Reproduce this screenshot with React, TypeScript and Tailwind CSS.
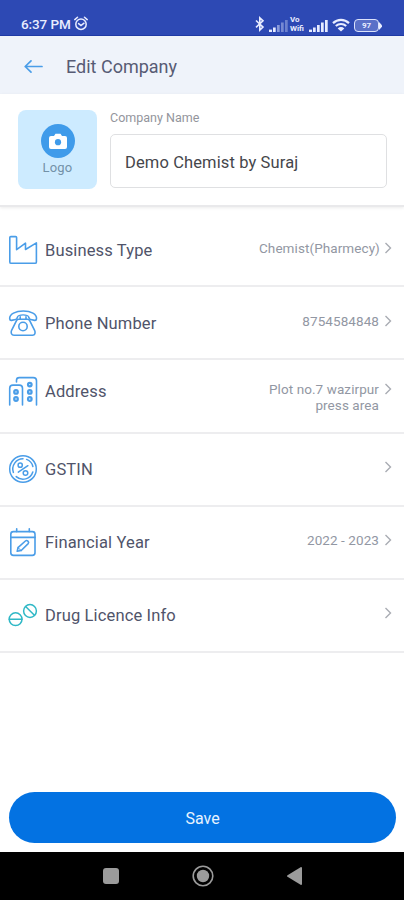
import React from 'react';

interface CompanyRow {
  label: string;
  value?: string;
  icon: React.ReactNode;
  alignTop?: boolean;
}

const iconProps = {
  width: 30,
  height: 30,
  viewBox: '0 0 30 30',
  fill: 'none',
  stroke: '#4a9de8',
  strokeWidth: 1.6,
  strokeLinecap: 'round' as const,
  strokeLinejoin: 'round' as const,
};

function FactoryIcon() {
  return (
    <svg {...iconProps}>
      <path d="M2.8 1.6h4.8q1 0 1 1v12.1l8.9-6.5v6.3l10.9-6.6v19q0 1.4-1.4 1.4H3.2q-1.4 0-1.4-1.4V2.6q0-1 1-1Z" />
    </svg>
  );
}

function PhoneIcon() {
  return (
    <svg {...iconProps}>
      <path d="M9.4 9.3c-.3 1.5-.9 2-1.8 2.2l-4.1.9c-1.1.1-1.7-.5-1.8-1.5C1.2 6.1 7.7 3 15.3 3S29 6.1 28.5 10.9c-.1 1-.7 1.6-1.8 1.5l-4.1-.9c-.9-.2-1.5-.7-1.8-2.2" />
      <path d="M9.4 9.3C10 7.4 12.4 6.9 15.1 6.9s5.1.5 5.7 2.4" strokeWidth="1.2" />
      <path d="M12.2 8.8v2.4h5.8V8.8M12.2 11.2h-1.4c-1.1 0-1.7.5-2.3 1.5l-4.9 9.6c-1.1 2.5-.1 5 2.4 5h18.5c2.5 0 3.2-2.5 2.1-5l-4.9-9.6c-.6-1-1.2-1.5-2.3-1.5H18" />
      <circle cx="15" cy="18.5" r="4.2" />
    </svg>
  );
}

function BuildingsIcon() {
  return (
    <svg {...iconProps}>
      <path d="M1.7 29V12.3q0-3.2 3.2-3.2h6.4q3.2 0 3.2 3.2V29M8.5 6V4.2q0-2.6 2.8-2.6h14q3.2 0 3.2 3.2V29" />
      <g strokeWidth="2.2">
        <circle cx="8" cy="15.9" r="1.8" />
        <circle cx="8" cy="23" r="1.8" />
        <circle cx="21.8" cy="8.6" r="1.8" />
        <circle cx="21.8" cy="15.9" r="1.8" />
        <circle cx="21.8" cy="23" r="1.8" />
      </g>
    </svg>
  );
}

function GstIcon() {
  return (
    <svg {...iconProps} strokeWidth={1.5}>
      <circle cx="15" cy="15" r="13.3" />
      <path d="M15 4.8A10.2 10.2 0 0 0 5.4 18.4M8.2 22.6A10.2 10.2 0 0 0 24.8 18M24.9 12.5A10.2 10.2 0 0 0 18.6 5.4" />
      <path d="m10.3 18.2 9.6-6.5" />
      <circle cx="12.2" cy="11.2" r="2.1" />
      <circle cx="17.5" cy="19" r="2.3" />
    </svg>
  );
}

function CalendarIcon() {
  return (
    <svg {...iconProps}>
      <rect x="2.8" y="4.6" width="24.2" height="23.8" rx="2.6" />
      <path d="M2.8 10.4H27M8.7 1.8v2.8M21.3 1.8v2.8" />
      <path d="m10 20.7 7.4-6.7c1.6-1.3 4.2.9 2.8 2.6l-7 6.9-4 .8.8-3.6Z" />
      <path d="m10 20.7 3.2 2.8" strokeWidth="1" />
    </svg>
  );
}

function PillsIcon() {
  return (
    <svg {...iconProps} stroke="#2fb8c6" strokeWidth={1.5}>
      <circle cx="7.6" cy="19.2" r="6.4" />
      <path d="M1.2 19.2H14" />
      <circle cx="22" cy="11" r="6.4" />
      <path d="m17.6 6.5 8.8 8.8" />
    </svg>
  );
}

const rows: CompanyRow[] = [
  { label: 'Business Type', value: 'Chemist(Pharmecy)', icon: <FactoryIcon /> },
  { label: 'Phone Number', value: '8754584848', icon: <PhoneIcon /> },
  { label: 'Address', value: 'Plot no.7 wazirpur press area', icon: <BuildingsIcon />, alignTop: true },
  { label: 'GSTIN', icon: <GstIcon /> },
  { label: 'Financial Year', value: '2022 - 2023', icon: <CalendarIcon /> },
  { label: 'Drug Licence Info', icon: <PillsIcon /> },
];

function SignalBars({ dim }: { dim?: boolean }) {
  return (
    <svg width="19" height="13" viewBox="0 0 19 13" fill="#e6ebff">
      <rect x="0" y="10.6" width="3" height="2.4" />
      <rect x="4" y="8.5" width="2.7" height="4.5" />
      <rect x="8" y="6" width="2.7" height="7" opacity={dim ? 0.5 : 1} />
      <rect x="12" y="3.5" width="2.7" height="9.5" opacity={dim ? 0.4 : 1} />
      <rect x="16" y="1" width="2.7" height="12" opacity={dim ? 0.35 : 1} />
    </svg>
  );
}

function StatusBar() {
  return (
    <div className="flex h-9 items-end border-b border-[#1f3aa5] bg-[#2d49b4] pb-[3px] pl-[21px] pr-[22px] text-[#e9edff]">
      <span className="text-[13.5px] leading-[15px] font-medium tracking-[-0.1px]">6:37 PM</span>
      <svg className="ml-[3px] mb-px" width="14" height="15" viewBox="0 0 14 15" fill="none" stroke="currentColor" strokeWidth="1.5" strokeLinecap="round">
        <circle cx="7" cy="8.2" r="5.2" />
        <path d="M.8 3.6 3.5 1.2M13.2 3.6l-2.7-2.4M4.6 7.6 7 9.6l3-2.4" />
      </svg>
      <div className="ml-auto flex items-end">
        <svg className="mr-[4px]" width="10" height="16" viewBox="0 0 10 16" fill="none" stroke="currentColor" strokeWidth="1.6">
          <path d="m1 4.5 7 6.6-3.2 3V1.9L8 4.8 1 11.3" />
        </svg>
        <SignalBars dim />
        <div className="ml-[2px] mr-[3px] w-4 text-[8px] leading-none font-bold">
          <div className="h-[9px] leading-[9px]">Vo</div>
          <div className="h-[8px] leading-[9px]">Wifi</div>
        </div>
        <SignalBars />
        <svg className="ml-[4px]" width="18" height="14" viewBox="0 0 18 14" fill="none" stroke="currentColor" strokeWidth="2.2">
          <path d="M1 5.1C5.6.8 12.4.8 17 5.1M3.8 8c3-2.7 7.4-2.7 10.4 0" />
          <path d="m9 13.4-3.3-3c1.9-1.8 4.7-1.8 6.6 0Z" fill="currentColor" stroke="none" />
        </svg>
        <div className="ml-[4px] flex items-center">
          <div className="flex h-[13px] w-[25px] items-center justify-center rounded-[4px] border-[1.5px] border-[#dbe2fb] bg-[#5a70c8] text-[8px] leading-none font-bold">
            97
          </div>
          <svg width="3" height="8" viewBox="0 0 3 8" fill="currentColor">
            <path d="M0 0 3 3.2v1.6L0 8Z" />
          </svg>
        </div>
      </div>
    </div>
  );
}

function Header() {
  return (
    <header className="flex h-[58px] items-center bg-[#eff3fa] pl-6 pt-[3px]">
      <svg width="19" height="14" viewBox="0 0 19 14" fill="none" stroke="#4a9de8" strokeWidth="1.7" strokeLinecap="round" strokeLinejoin="round">
        <path d="M18 6.5H1.2M7 .9 1.2 6.5 7 12.1" />
      </svg>
      <h1 className="ml-[23px] text-[18px] leading-6 text-[#575b74]">Edit Company</h1>
    </header>
  );
}

function CompanyCard() {
  return (
    <section className="flex h-[113px] items-start border-b-2 border-[#e9e9eb] pl-[18px] pt-4 shadow-[0_1px_3px_rgba(0,0,0,0.08)]">
      <button className="flex h-[79px] w-[79px] flex-col items-center rounded-lg bg-[#cdebff] pt-[14px]">
        <span className="flex h-[34px] w-[34px] items-center justify-center rounded-full bg-[#3f9bea]">
          <svg width="18" height="17" viewBox="0 0 18 17">
            <path d="M2 3h3l1.5-2.2h5L13 3h3q2 0 2 2v9q0 2-2 2H2q-2 0-2-2V5q0-2 2-2Z" fill="#fff" />
            <circle cx="9" cy="9.2" r="3.1" fill="#3f9bea" />
          </svg>
        </span>
        <span className="mt-[2px] text-[13px] leading-4 tracking-[0.2px] text-[#7391a8]">Logo</span>
      </button>
      <div className="ml-[13px] w-[277px]">
        <label className="block text-[12.5px] leading-4 text-[#93959c]">Company Name</label>
        <input
          className="mt-2 block h-[54px] w-full rounded-[5px] border border-[#dfe0e2] px-[14px] pt-[2px] text-[16.5px] tracking-[0.12px] text-[#45464b] outline-none"
          defaultValue="Demo Chemist by Suraj"
        />
      </div>
    </section>
  );
}

function SettingRow({ row }: { row: CompanyRow }) {
  return (
    <div className={`flex h-[73.2px] items-start border-b-2 border-[#ededef] pl-2 pr-[11px] ${row.alignTop ? 'pt-[16.5px]' : 'pt-[21.5px]'}`}>
      <div className="-mt-px">{row.icon}</div>
      <span className="ml-[7px] text-[16.5px] leading-[30px] tracking-[0.14px] text-[#50546a]">{row.label}</span>
      <div className="ml-auto flex items-start pt-[4px]">
        {row.value && (
          <span className="max-w-[120px] text-right text-[13.5px] leading-4 tracking-[0.08px] text-[#9297a3]">{row.value}</span>
        )}
        <svg className="ml-[4px] mt-[2px]" width="10" height="12" viewBox="0 0 10 12" fill="none" stroke="#a9acb3" strokeWidth="1.4">
          <path d="m2.5 1 5 5-5 5" />
        </svg>
      </div>
    </div>
  );
}

function NavBar() {
  return (
    <nav className="flex h-12 items-center justify-between bg-black pl-[103px] pr-[102px] text-[#9b9b9b]">
      <div className="h-4 w-4 rounded-[3px] bg-current" />
      <svg width="22" height="22" viewBox="0 0 22 22" fill="none" stroke="currentColor" strokeWidth="1.6">
        <circle cx="11" cy="11" r="9.8" />
        <circle cx="11" cy="11" r="6.2" fill="currentColor" stroke="none" />
      </svg>
      <svg width="15" height="18" viewBox="0 0 15 18" fill="currentColor">
        <path d="M14 0q1 0 1 1v16q0 1-1 1L.5 9.8q-1-.8 0-1.6Z" />
      </svg>
    </nav>
  );
}

export default function App() {
  return (
    <div className="flex h-[900px] w-full flex-col overflow-hidden bg-white font-['Roboto',sans-serif]">
      <StatusBar />
      <Header />
      <CompanyCard />
      <main className="flex-1 pt-[7px]">
        {rows.map(row => (
          <SettingRow key={row.label} row={row} />
        ))}
      </main>
      <div className="px-[9px] pb-[9px] pr-2">
        <button className="h-[51px] w-full rounded-full bg-[#0372e2] pt-[2px] text-[16px] text-[#e8f3ff]">Save</button>
      </div>
      <NavBar />
    </div>
  );
}
